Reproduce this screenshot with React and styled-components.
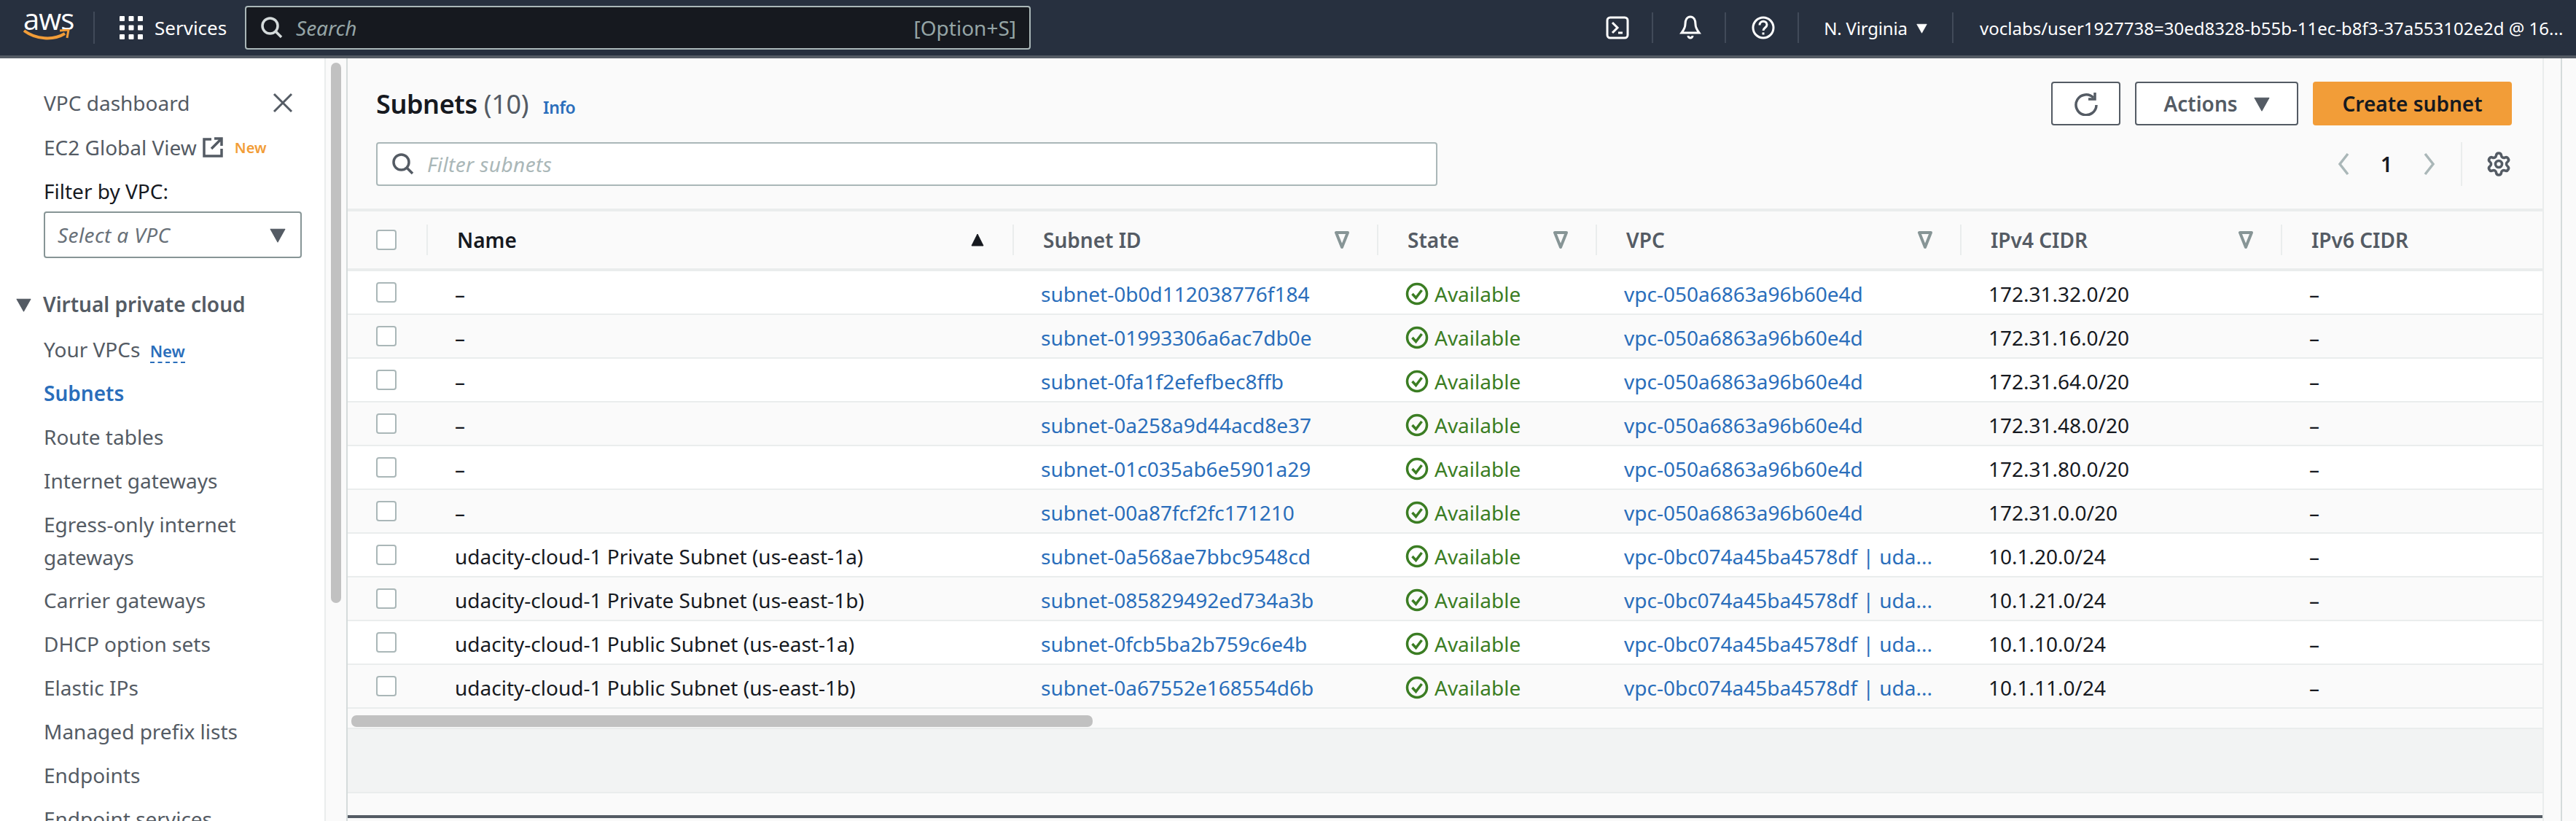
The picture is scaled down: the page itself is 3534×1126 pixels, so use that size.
import styled, { createGlobalStyle } from "styled-components"
import { Settings } from "lucide-react"

const GlobalStyle = createGlobalStyle`
    html, body {
        margin: 0;
        padding: 0;
        overflow: hidden;
        background: #fafafa;
    }
    * { box-sizing: border-box; }
`

const subnets = [
    { name: "–", id: "subnet-0b0d112038776f184", vpc: "vpc-050a6863a96b60e4d", cidr: "172.31.32.0/20" },
    { name: "–", id: "subnet-01993306a6ac7db0e", vpc: "vpc-050a6863a96b60e4d", cidr: "172.31.16.0/20" },
    { name: "–", id: "subnet-0fa1f2efefbec8ffb", vpc: "vpc-050a6863a96b60e4d", cidr: "172.31.64.0/20" },
    { name: "–", id: "subnet-0a258a9d44acd8e37", vpc: "vpc-050a6863a96b60e4d", cidr: "172.31.48.0/20" },
    { name: "–", id: "subnet-01c035ab6e5901a29", vpc: "vpc-050a6863a96b60e4d", cidr: "172.31.80.0/20" },
    { name: "–", id: "subnet-00a87fcf2fc171210", vpc: "vpc-050a6863a96b60e4d", cidr: "172.31.0.0/20" },
    { name: "udacity-cloud-1 Private Subnet (us-east-1a)", id: "subnet-0a568ae7bbc9548cd", vpc: "vpc-0bc074a45ba4578df | uda...", cidr: "10.1.20.0/24" },
    { name: "udacity-cloud-1 Private Subnet (us-east-1b)", id: "subnet-085829492ed734a3b", vpc: "vpc-0bc074a45ba4578df | uda...", cidr: "10.1.21.0/24" },
    { name: "udacity-cloud-1 Public Subnet (us-east-1a)", id: "subnet-0fcb5ba2b759c6e4b", vpc: "vpc-0bc074a45ba4578df | uda...", cidr: "10.1.10.0/24" },
    { name: "udacity-cloud-1 Public Subnet (us-east-1b)", id: "subnet-0a67552e168554d6b", vpc: "vpc-0bc074a45ba4578df | uda...", cidr: "10.1.11.0/24" },
]

const navLinks = ["Route tables", "Internet gateways", "Egress-only internet gateways", "Carrier gateways", "DHCP option sets", "Elastic IPs", "Managed prefix lists", "Endpoints", "Endpoint services"]

const Caret = ({ size = 20, color = "#545b64" }) => (
    <svg width={size} height={size} viewBox="0 0 20 20">
        <path d="M1 3h18L10 19z" fill={color} stroke={color} strokeWidth="1" strokeLinejoin="round" />
    </svg>
)

const FilterCaret = () => (
    <svg width="20" height="26" viewBox="0 0 20 26">
        <path d="M2 3h16L10 23z" fill="none" stroke="#879596" strokeWidth="4" strokeLinejoin="round" />
    </svg>
)

const SearchIcon = ({ color }) => (
    <svg width="30" height="30" viewBox="0 0 30 30" fill="none" stroke={color} strokeWidth="3.5">
        <circle cx="12.5" cy="12.5" r="10.5" />
        <path d="M20 20l8 8" />
    </svg>
)

const CheckIcon = () => (
    <svg width="32" height="32" viewBox="0 0 32 32" fill="none" stroke="#3b7d23" strokeWidth="3.5">
        <circle cx="16" cy="16" r="13.5" />
        <path d="M9.5 16l5 5.5 8-10.5" />
    </svg>
)

const App = () => {
    return (
        <Page>
            <GlobalStyle />
            <TopNav>
                <AwsLogo>
                    <AwsText>aws</AwsText>
                    <svg width="64" height="16" viewBox="0 0 64 16" fill="none">
                        <path d="M1 2c16 12 40 14 56 4" stroke="#f29d38" strokeWidth="4" />
                        <path d="M50 2l12-1-2 11" stroke="#f29d38" strokeWidth="3" />
                    </svg>
                </AwsLogo>
                <ServicesButton>
                    <svg width="32" height="32" viewBox="0 0 32 32" fill="#fff">
                        {[0, 1, 2].flatMap((r) => [0, 1, 2].map((c) => (
                            <rect key={`${r}${c}`} x={c * 12.5} y={r * 12.5} width="7" height="7" rx="1" />
                        )))}
                    </svg>
                    Services
                </ServicesButton>
                <SearchBar>
                    <SearchIcon color="#d5dbdb" />
                    <SearchText>Search</SearchText>
                    <Shortcut>[Option+S]</Shortcut>
                </SearchBar>
                <NavRight>
                    <NavIcon>
                        <svg width="32" height="32" viewBox="0 0 32 32" fill="none" stroke="#fff" strokeWidth="3">
                            <rect x="2" y="2" width="28" height="28" rx="4" />
                            <path d="M9 9l7 7-7 7M17 23h6" />
                        </svg>
                    </NavIcon>
                    <NavIcon>
                        <svg width="32" height="34" viewBox="0 0 32 34" fill="none" stroke="#fff" strokeWidth="3">
                            <path d="M16 2c-5 0-7 5-7 10 0 5-2 8-5 12h24c-3-4-5-7-5-12 0-5-2-10-7-10z" />
                            <path d="M13 28a3 3 0 0 0 6 0" />
                        </svg>
                    </NavIcon>
                    <NavIcon>
                        <svg width="32" height="32" viewBox="0 0 32 32" fill="none" stroke="#fff" strokeWidth="3">
                            <circle cx="16" cy="16" r="14" />
                            <path d="M11 12.5c0-7 10-7 10-.5 0 4-5 4-5 8" />
                            <path d="M16 22.5v3" />
                        </svg>
                    </NavIcon>
                    <Region>
                        N. Virginia
                        <Caret size={15} color="#fff" />
                    </Region>
                    <Account>voclabs/user1927738=30ed8328-b55b-11ec-b8f3-37a553102e2d @ 16...</Account>
                </NavRight>
            </TopNav>
            <Body>
                <Sidebar>
                    <SideTop>
                        <SideLink>VPC dashboard</SideLink>
                        <svg width="28" height="28" viewBox="0 0 28 28" stroke="#545b64" strokeWidth="3">
                            <path d="M2 2l24 24M26 2L2 26" />
                        </svg>
                    </SideTop>
                    <SideRow>
                        <SideLink>EC2 Global View</SideLink>
                        <svg width="28" height="28" viewBox="0 0 28 28" fill="none" stroke="#545b64" strokeWidth="3.5">
                            <path d="M12 3H2v23h24V16M12 16L25 3M16 2h10v10" />
                        </svg>
                        <NewBadge>New</NewBadge>
                    </SideRow>
                    <FilterLabel>Filter by VPC:</FilterLabel>
                    <VpcSelect>
                        <em>Select a VPC</em>
                        <Caret size={22} />
                    </VpcSelect>
                    <SectionTitle>
                        <Caret size={21} />
                        Virtual private cloud
                    </SectionTitle>
                    <SideList>
                        <SideItem>
                            Your VPCs <NewLink>New</NewLink>
                        </SideItem>
                        <SideItem $active>Subnets</SideItem>
                        {navLinks.map((item) => (
                            <SideItem key={item}>{item}</SideItem>
                        ))}
                    </SideList>
                </Sidebar>
                <ScrollTrack>
                    <ScrollThumb />
                </ScrollTrack>
                <Main>
                    <PageHeader>
                        <HeaderRow>
                            <Title>
                                Subnets <Count>(10)</Count>
                                <InfoLink>Info</InfoLink>
                            </Title>
                            <Actions>
                                <Button $square>
                                    <svg width="34" height="34" viewBox="0 0 34 34" fill="none" stroke="#545b64" strokeWidth="3.5">
                                        <path d="M27 9A14 14 0 1 0 31 19" />
                                        <path d="M29 2v9H20" />
                                    </svg>
                                </Button>
                                <Button>
                                    Actions
                                    <Caret size={22} />
                                </Button>
                                <PrimaryButton>Create subnet</PrimaryButton>
                            </Actions>
                        </HeaderRow>
                        <HeaderRow>
                            <FilterInput>
                                <SearchIcon color="#545b64" />
                                <em>Filter subnets</em>
                            </FilterInput>
                            <Pagination>
                                <svg width="20" height="32" viewBox="0 0 20 32" fill="none" stroke="#aab7b8" strokeWidth="3.5">
                                    <path d="M16 2L5 16l11 14" />
                                </svg>
                                <PageNumber>1</PageNumber>
                                <svg width="20" height="32" viewBox="0 0 20 32" fill="none" stroke="#aab7b8" strokeWidth="3.5">
                                    <path d="M4 2l11 14L4 30" />
                                </svg>
                                <SettingsCell>
                                    <Settings size={36} color="#545b64" strokeWidth={2.4} />
                                </SettingsCell>
                            </Pagination>
                        </HeaderRow>
                    </PageHeader>
                    <Table>
                        <HeadRow>
                            <CheckCell><CheckBox /></CheckCell>
                            <HeadCell $strong>
                                Name
                                <svg width="20" height="20" viewBox="0 0 20 20">
                                    <path d="M10 2l8 16H2z" fill="#16191f" stroke="#16191f" strokeLinejoin="round" />
                                </svg>
                            </HeadCell>
                            <HeadCell>Subnet ID<FilterCaret /></HeadCell>
                            <HeadCell>State<FilterCaret /></HeadCell>
                            <HeadCell>VPC<FilterCaret /></HeadCell>
                            <HeadCell>IPv4 CIDR<FilterCaret /></HeadCell>
                            <HeadCell>IPv6 CIDR</HeadCell>
                        </HeadRow>
                        {subnets.map((s) => (
                            <Row key={s.id}>
                                <CheckCell><CheckBox /></CheckCell>
                                <Cell>{s.name}</Cell>
                                <Cell><TableLink>{s.id}</TableLink></Cell>
                                <Cell>
                                    <Status><CheckIcon />Available</Status>
                                </Cell>
                                <Cell><TableLink>{s.vpc}</TableLink></Cell>
                                <Cell>{s.cidr}</Cell>
                                <Cell>–</Cell>
                            </Row>
                        ))}
                    </Table>
                    <HScroll>
                        <HThumb />
                    </HScroll>
                    <EmptyBand />
                    <BottomGap />
                    <FooterLine />
                </Main>
                <RightGutter />
            </Body>
        </Page>
    )
}

const Page = styled.div`
    width: 3534px;
    height: 1126px;
    overflow: hidden;
    display: flex;
    flex-direction: column;
    font-family: "Noto Sans", "Open Sans", sans-serif;
    font-size: 28px;
    color: #16191f;
    background: #fafafa;
`

const TopNav = styled.header`
    height: 80px;
    flex: none;
    display: flex;
    align-items: center;
    background: #27303f;
    border-bottom: 4px solid #545b64;
    color: #fff;
`

const AwsLogo = styled.div`
    width: 130px;
    height: 44px;
    padding-left: 32px;
    border-right: 2px solid #414a59;
    display: flex;
    flex-direction: column;
    align-items: flex-start;
`

const AwsText = styled.span`
    font-family: "Open Sans", sans-serif;
    font-size: 40px;
    line-height: 40px;
    margin: -10px 0 -6px;
    letter-spacing: -1px;
`

const ServicesButton = styled.div`
    display: flex;
    align-items: center;
    gap: 16px;
    margin-left: 34px;
    font-size: 26px;
    width: 172px;
`

const SearchBar = styled.div`
    width: 1078px;
    height: 60px;
    display: flex;
    align-items: center;
    padding: 0 18px 0 20px;
    gap: 18px;
    background: #16191f;
    border: 2px solid #aab7b8;
    border-radius: 4px;
`

const SearchText = styled.em`
    flex: 1;
    color: #95a5a6;
    font-size: 28px;
`

const Shortcut = styled.span`
    color: #95a5a6;
    font-size: 28px;
`

const NavRight = styled.div`
    margin-left: auto;
    display: flex;
    align-items: center;
`

const NavIcon = styled.div`
    width: 100px;
    height: 42px;
    display: flex;
    align-items: center;
    justify-content: center;
    padding-left: 3px;
    border-right: 2px solid #414a59;
`

const Region = styled.div`
    width: 212px;
    height: 42px;
    display: flex;
    align-items: center;
    justify-content: center;
    gap: 12px;
    font-size: 24px;
    letter-spacing: -0.2px;
    border-right: 2px solid #414a59;
`

const Account = styled.div`
    width: 854px;
    padding-left: 36px;
    font-size: 24px;
    white-space: nowrap;
`

const Body = styled.div`
    flex: 1;
    min-height: 0;
    display: flex;
`

const Sidebar = styled.nav`
    width: 447px;
    flex: none;
    background: #fff;
    border-right: 2px solid #eaeded;
    padding: 38px 0 0 60px;
    color: #545b64;
    overflow: hidden;
`

const SideTop = styled.div`
    display: flex;
    align-items: center;
    justify-content: space-between;
    padding-right: 43px;
    height: 46px;
`

const SideRow = styled.div`
    display: flex;
    align-items: center;
    gap: 8px;
    height: 46px;
    margin-top: 15px;
`

const SideLink = styled.span`
    font-size: 28px;
`

const NewBadge = styled.span`
    color: #f29d38;
    font-size: 20px;
    font-weight: 600;
    margin-left: 8px;
`

const FilterLabel = styled.div`
    margin-top: 14px;
    height: 46px;
    line-height: 46px;
    color: #16191f;
`

const VpcSelect = styled.div`
    width: 354px;
    height: 64px;
    margin-top: 5px;
    display: flex;
    align-items: center;
    justify-content: space-between;
    padding: 0 20px 0 17px;
    border: 2px solid #879596;
    border-radius: 4px;
    em { color: #687078; letter-spacing: 0.4px; }
`

const SectionTitle = styled.div`
    margin: 40px 0 0 -38px;
    height: 46px;
    display: flex;
    align-items: center;
    gap: 16px;
    font-weight: 600;
`

const SideList = styled.div`
    display: flex;
    flex-direction: column;
    gap: 14px;
    margin-top: 17px;
    padding-right: 30px;
`

const SideItem = styled.div`
    line-height: 45px;
    min-height: 46px;
    color: ${(p) => (p.$active ? "#2a6ebb" : "#545b64")};
    font-weight: ${(p) => (p.$active ? 600 : 400)};
    &:first-child { height: 46px; }
`

const NewLink = styled.span`
    display: inline-block;
    line-height: 30px;
    margin-left: 6px;
    color: #2a6ebb;
    font-size: 22px;
    font-weight: 600;
    border-bottom: 2px dashed #2a6ebb;
`

const ScrollTrack = styled.div`
    width: 30px;
    flex: none;
    padding: 6px 7px 0 7px;
    background: #fafafa;
    border-right: 2px solid #d5dbdb;
`

const ScrollThumb = styled.div`
    height: 741px;
    width: 14px;
    border-radius: 7px;
    background: #c1c1c1;
`

const Main = styled.main`
    width: 3011px;
    flex: none;
    display: flex;
    flex-direction: column;
    margin-top: 4px;
    overflow: hidden;
`

const PageHeader = styled.div`
    height: 202px;
    flex: none;
    padding: 28px 42px 0 39px;
    display: flex;
    flex-direction: column;
    gap: 23px;
    background: #fafafa;
`

const HeaderRow = styled.div`
    display: flex;
    align-items: center;
    justify-content: space-between;
    height: 60px;
`

const Title = styled.h1`
    margin: 0;
    font-size: 36px;
    font-weight: 600;
    letter-spacing: -0.4px;
`

const Count = styled.span`
    font-weight: 400;
    color: #545b64;
`

const InfoLink = styled.a`
    margin-left: 20px;
    color: #2a6ebb;
    font-size: 23px;
    font-weight: 600;
`

const Actions = styled.div`
    display: flex;
    gap: 20px;
`

const Button = styled.div`
    width: ${(p) => (p.$square ? "95px" : "224px")};
    height: 60px;
    display: flex;
    align-items: center;
    justify-content: center;
    gap: 22px;
    background: #fff;
    border: 2px solid #545b64;
    border-radius: 4px;
    color: #545b64;
    font-weight: 600;
`

const PrimaryButton = styled.div`
    width: 273px;
    height: 60px;
    display: flex;
    align-items: center;
    justify-content: center;
    background: #f29d38;
    border-radius: 4px;
    font-weight: 600;
`

const FilterInput = styled.div`
    width: 1456px;
    height: 60px;
    display: flex;
    align-items: center;
    gap: 18px;
    padding-left: 20px;
    background: #fff;
    border: 2px solid #aab7b8;
    border-radius: 4px;
    em { color: #aab7b8; letter-spacing: 0.4px; }
`

const Pagination = styled.div`
    display: flex;
    align-items: center;
    gap: 41px;
`

const PageNumber = styled.span`
    font-weight: 600;
`

const SettingsCell = styled.div`
    height: 60px;
    margin-left: -8px;
    padding-left: 32px;
    display: flex;
    align-items: center;
    border-left: 2px solid #eaeded;
`

const Table = styled.div`
    flex: none;
    display: grid;
    grid-template-columns: 108px 804px 500px 300px 500px 440px 359px;
    width: 3011px;
`

const HeadRow = styled.div`
    grid-column: 1 / -1;
    display: grid;
    grid-template-columns: subgrid;
    align-items: center;
    height: 86px;
    border-top: 4px solid #eaeded;
    border-bottom: 4px solid #eaeded;
    background: #fafafa;
`

const CheckCell = styled.div`
    padding-left: 39px;
    display: flex;
    align-items: center;
`

const CheckBox = styled.span`
    width: 28px;
    height: 28px;
    background: #fff;
    border: 2px solid #aab7b8;
    border-radius: 4px;
`

const HeadCell = styled.div`
    height: 42px;
    display: flex;
    align-items: center;
    justify-content: space-between;
    padding: 0 38px 0 40px;
    border-left: 2px solid #eaeded;
    font-weight: 600;
    color: ${(p) => (p.$strong ? "#16191f" : "#545b64")};
`

const Row = styled.div`
    grid-column: 1 / -1;
    display: grid;
    grid-template-columns: subgrid;
    align-items: center;
    height: 60px;
    border-bottom: 2px solid #eaeded;
    background: #fff;
    &:nth-child(odd) { background: #fafafa; }
`

const Cell = styled.div`
    padding: 3px 20px 0 39px;
    white-space: nowrap;
`

const TableLink = styled.a`
    color: #2a6ebb;
`

const Status = styled.span`
    display: flex;
    align-items: center;
    gap: 8px;
    color: #3b7d23;
`

const HScroll = styled.div`
    height: 28px;
    flex: none;
    padding: 9px 5px 0;
    background: #fafafa;
    border-bottom: 2px solid #eaeded;
`

const HThumb = styled.div`
    width: 1017px;
    height: 16px;
    border-radius: 7px;
    background: #c1c1c1;
`

const EmptyBand = styled.div`
    height: 88px;
    flex: none;
    background: #f2f3f3;
    border-bottom: 2px solid #eaeded;
`

const BottomGap = styled.div`
    height: 30px;
    flex: none;
    background: #fafafa;
`

const FooterLine = styled.div`
    height: 4px;
    flex: none;
    background: #545b64;
`

const RightGutter = styled.div`
    width: 27px;
    flex: none;
    border-left: 2px solid #eaeded;
    border-right: 2px solid #d5dbdb;
    background: #fafafa;
`

export default App
